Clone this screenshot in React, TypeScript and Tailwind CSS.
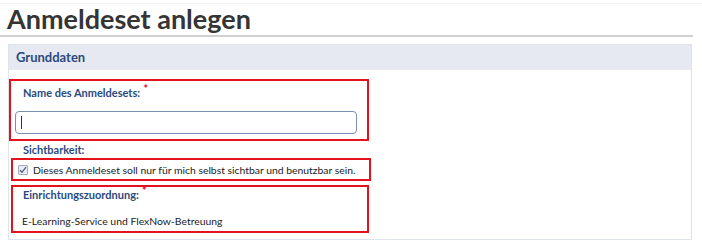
import React from 'react';

const Label = ({ text, required }: { text: string; required?: boolean }) => (
  <div className="text-[11px] font-bold text-[#2b4a7e] leading-4 whitespace-nowrap">
    {text}
    {required && <span className="text-[#e3121c] text-[12px] relative -top-[4px] ml-[3px]">*</span>}
  </div>
);

export default function App() {
  return (
    <div className="w-[702px] h-[248px] bg-white overflow-hidden font-['Lato','Liberation_Sans',sans-serif] text-[#222]">
      <div className="pt-[3px]">
        <div className="border-t border-[#f3f3f3]" />
        <h1 className="w-[693px] h-[33px] border-b-2 border-[#d0d0d0] pl-[7px] text-[27px] font-bold leading-[30px] text-[#353535]">
          Anmeldeset anlegen
        </h1>
      </div>

      <div className="mt-[7px] ml-[8px] w-[684px] h-[196px] border border-[#dfe3ec]">
        <div className="h-[25px] bg-[#e6e9f1] pl-[7px] flex items-center text-[13px] font-bold text-[#2b4a7e]">
          Grunddaten
        </div>

        <div className="mt-[9px] w-[360px] h-[62px] border-2 border-[#e3121c] pl-[4px] pt-[4px]">
          <div className="pl-[8px]">
            <Label text="Name des Anmeldesets:" required />
          </div>
          <div className="mt-[10px] w-[342px] h-[23px] rounded-[4px] border border-[#7b8eb3] flex items-center pl-[5px]">
            <span className="w-px h-[13px] bg-[#333]" />
          </div>
        </div>

        <div className="pl-[14px] pt-[1px] h-[17px]">
          <Label text="Sichtbarkeit:" />
        </div>

        <div className="ml-[2px] w-[360px] h-[23px] border-2 border-[#e3121c] flex items-center pl-[5px] gap-[5px]">
          <span className="w-[10px] h-[10px] border border-[#a4aec0] bg-[#e9edf3] rounded-[1px] flex items-center justify-center">
            <svg width="8" height="8" viewBox="0 0 8 8">
              <path d="M1 4.2 L3 6.3 L7 1.2" fill="none" stroke="#4a5f86" strokeWidth="1.3" />
            </svg>
          </span>
          <span className="text-[10.4px] leading-4 text-[#222] whitespace-nowrap">
            Dieses Anmeldeset soll nur für mich selbst sichtbar und benutzbar sein.
          </span>
        </div>

        <div className="mt-[4px] ml-[2px] w-[358px] h-[48px] border-2 border-[#e3121c] pl-[10px]">
          <Label text="Einrichtungszuordnung:" required />
          <div className="mt-[10px] -ml-[1px] text-[10.4px] leading-4 text-[#222] whitespace-nowrap">
            E-Learning-Service und FlexNow-Betreuung
          </div>
        </div>
      </div>
    </div>
  );
}
